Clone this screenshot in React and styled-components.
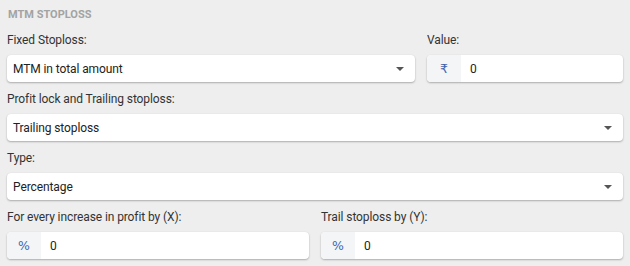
import styled, { createGlobalStyle } from 'styled-components';

// ======================
// global
// ======================
const GlobalStyle = createGlobalStyle`
    body {
        margin: 0;
        background: #eeeeee;
        font-family: Roboto, 'Noto Sans', sans-serif;
    }
`;

// ======================
// styled parts
// ======================
const Panel = styled.div`
    padding: 8px 7px 6px;
    background: #eeeeee;
`;

const Heading = styled.div`
    font-size: 11px;
    font-weight: 700;
    line-height: 14px;
    color: #a3a3a3;
    text-transform: uppercase;
    padding-left: 1px;
    margin-bottom: 10px;
`;

const Row = styled.div`
    display: grid;
    grid-template-columns: ${props => props.cols || '1fr'};
    column-gap: 12px;
    margin-bottom: 9px;

    &:last-child {
        margin-bottom: 0;
    }
`;

const Field = styled.div`
    display: flex;
    flex-direction: column;
`;

const Label = styled.label`
    font-size: 12px;
    letter-spacing: -0.1px;
    line-height: 17px;
    color: #333;
    margin-bottom: 6px;
`;

const Box = styled.div`
    height: 27px;
    background: #fff;
    border-radius: 4px;
    box-shadow: 0 1px 2px rgba(0, 0, 0, 0.28), 0 0 1px rgba(0, 0, 0, 0.08);
    display: flex;
    align-items: center;
    overflow: hidden;
    font-size: 12px;
    letter-spacing: -0.1px;
    color: #222;
`;

const SelectText = styled.span`
    flex: 1;
    padding-left: 6px;
`;

const Caret = styled.span`
    width: 0;
    height: 0;
    border-left: 4px solid transparent;
    border-right: 4px solid transparent;
    border-top: 4px solid #555;
    margin-right: 11px;
`;

const Prefix = styled.span`
    width: 34px;
    height: 100%;
    background: #f4f5f7;
    color: #4665ad;
    display: flex;
    align-items: center;
    justify-content: center;
    font-size: 12.5px;
    font-family: 'DejaVu Sans', 'Noto Sans', sans-serif;
`;

const Value = styled.span`
    padding-left: 9px;
`;

// ======================
// components
// ======================
function Select({ label, value }) {
    return (
        <Field>
            <Label>{label}</Label>
            <Box>
                <SelectText>{value}</SelectText>
                <Caret />
            </Box>
        </Field>
    );
}

function PrefixInput({ label, prefix, value }) {
    return (
        <Field>
            <Label>{label}</Label>
            <Box>
                <Prefix>{prefix}</Prefix>
                <Value>{value}</Value>
            </Box>
        </Field>
    );
}

export default function App() {
    return (
        <Panel>
            <GlobalStyle />
            <Heading>MTM Stoploss</Heading>
            <Row cols="1fr 196px">
                <Select label="Fixed Stoploss:" value="MTM in total amount" />
                <PrefixInput label="Value:" prefix="₹" value="0" />
            </Row>
            <Row>
                <Select label="Profit lock and Trailing stoploss:" value="Trailing stoploss" />
            </Row>
            <Row>
                <Select label="Type:" value="Percentage" />
            </Row>
            <Row cols="1fr 1fr">
                <PrefixInput label="For every increase in profit by (X):" prefix="%" value="0" />
                <PrefixInput label="Trail stoploss by (Y):" prefix="%" value="0" />
            </Row>
        </Panel>
    );
}
